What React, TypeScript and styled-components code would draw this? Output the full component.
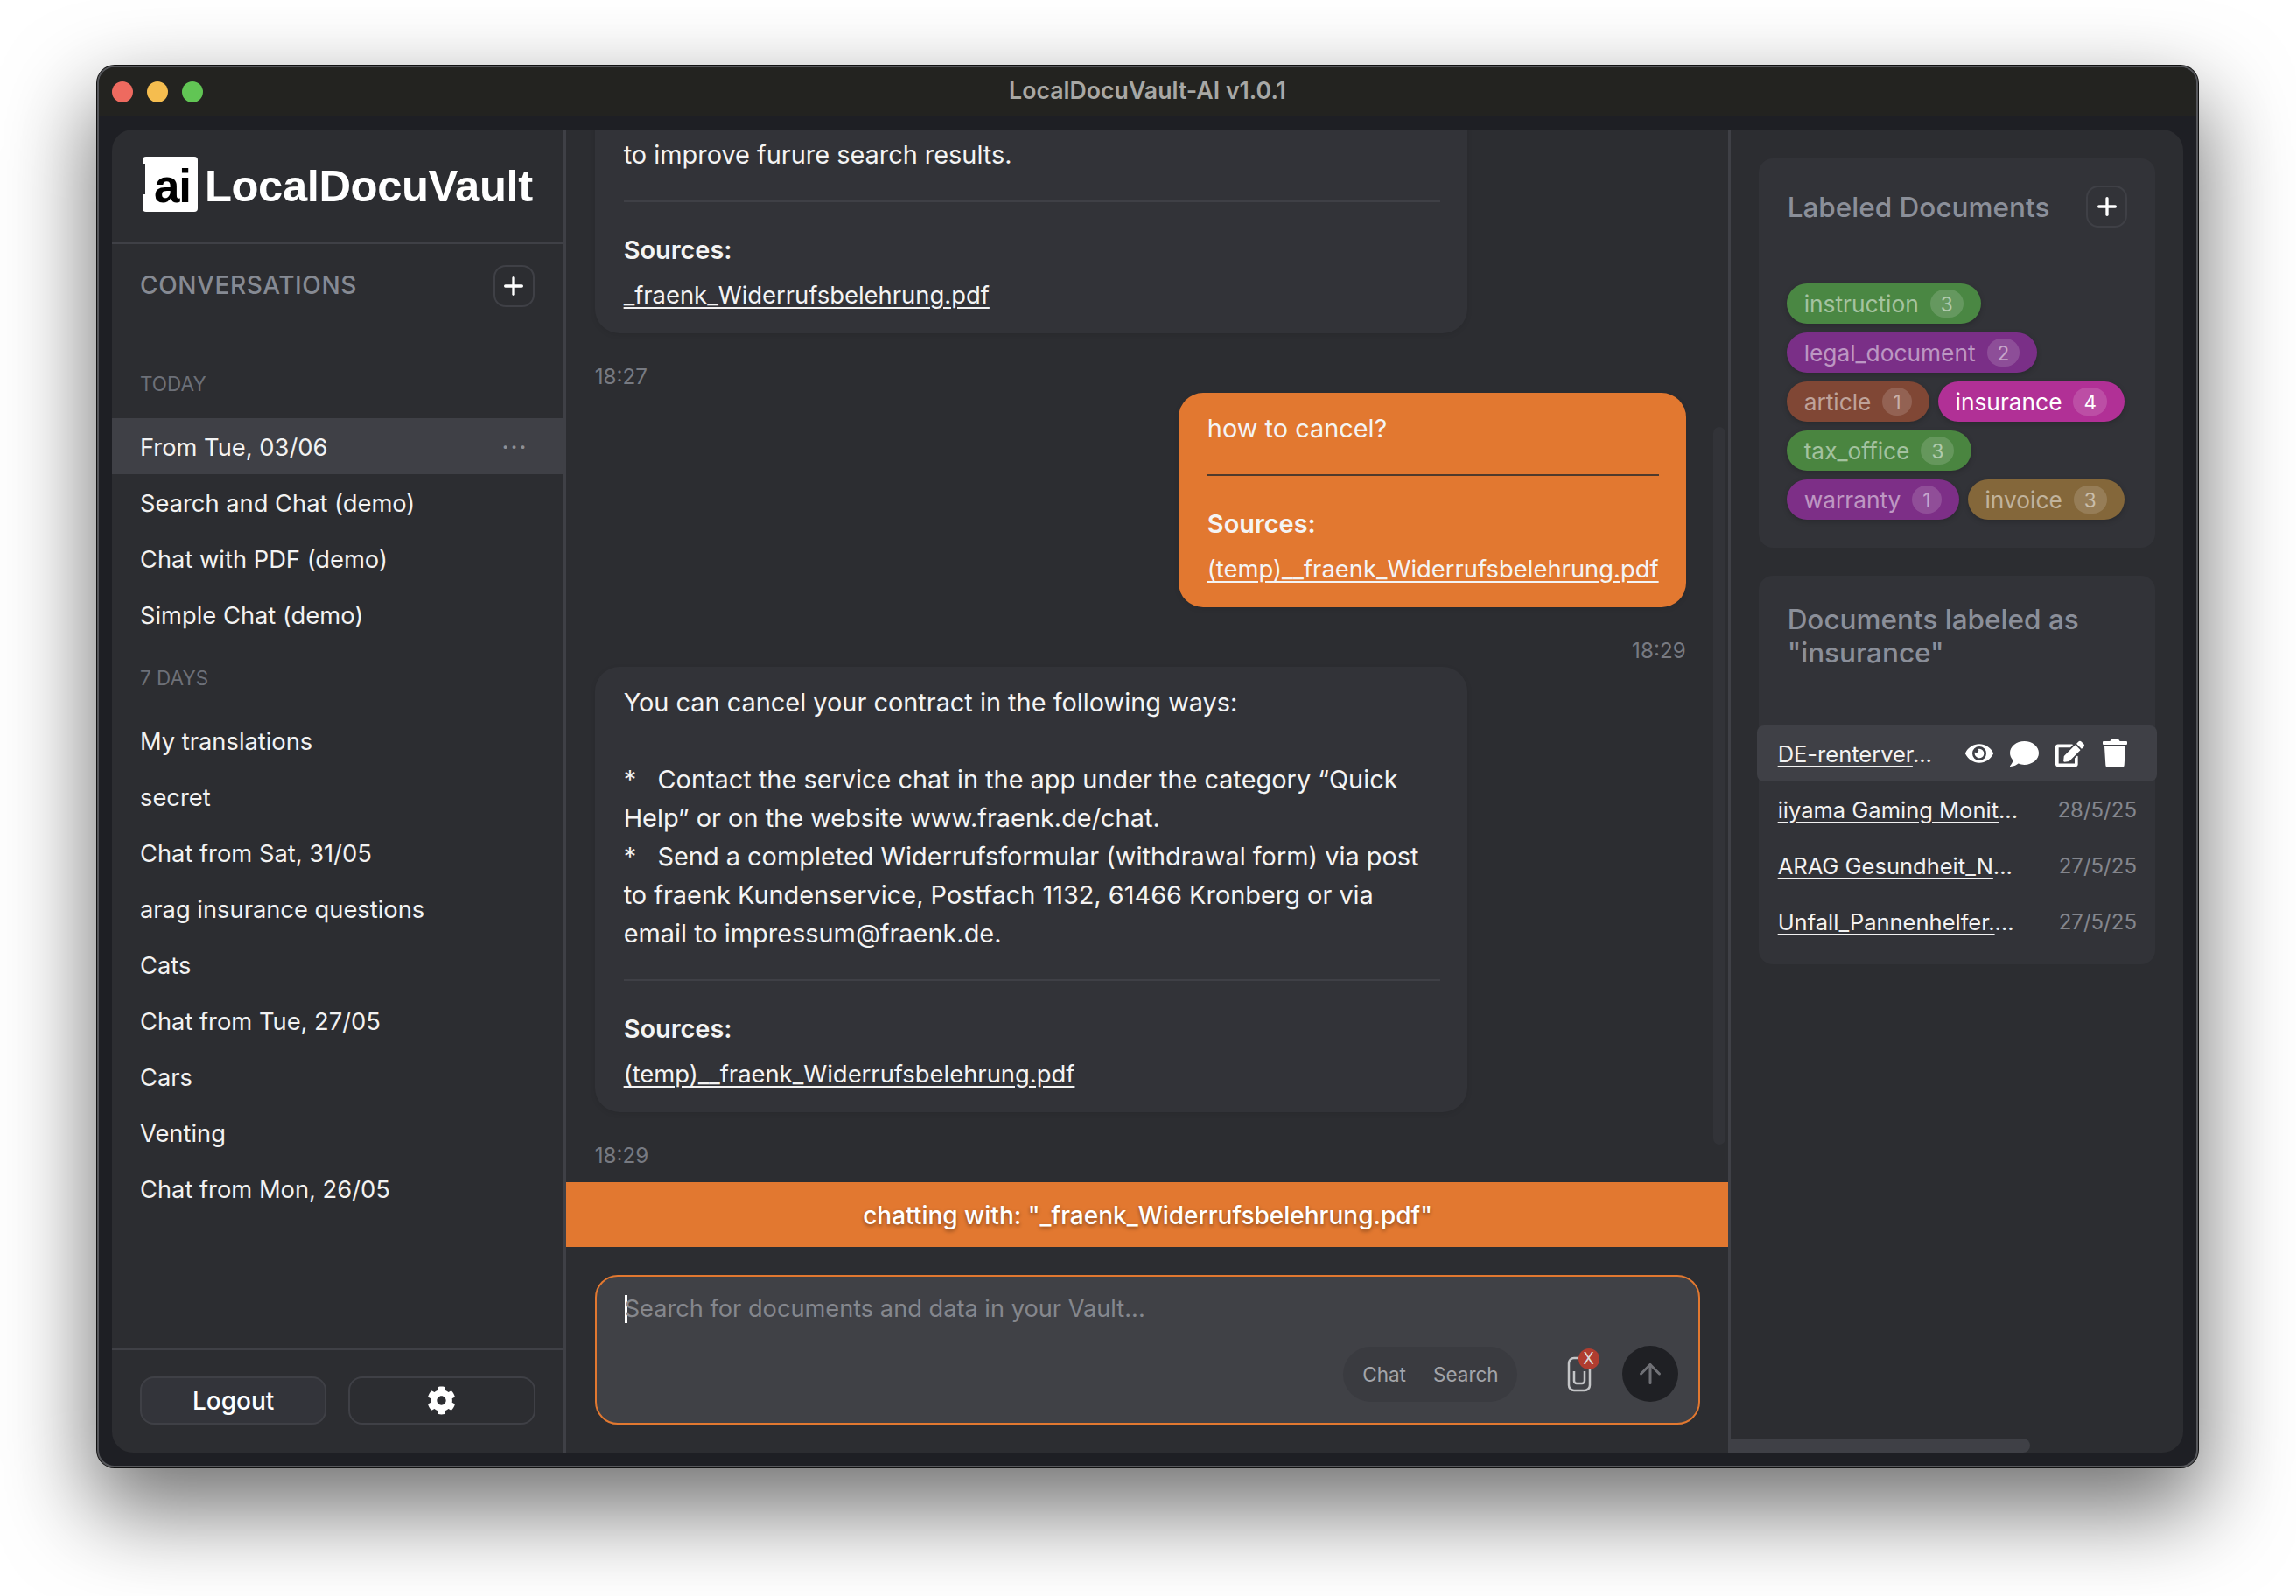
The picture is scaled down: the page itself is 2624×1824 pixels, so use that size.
import { ArrowUp, Plus } from 'lucide-react';
import { FaCog, FaComment, FaEdit, FaEye, FaTrash } from 'react-icons/fa';
import styled, { createGlobalStyle } from 'styled-components';

const TAGS = [
  [{ name: 'instruction', count: 3, color: '#4a8743' }],
  [{ name: 'legal_document', count: 2, color: '#7a2f87' }],
  [
    { name: 'article', count: 1, color: '#804735' },
    { name: 'insurance', count: 4, color: '#b13096', active: true },
  ],
  [{ name: 'tax_office', count: 3, color: '#4a8540' }],
  [
    { name: 'warranty', count: 1, color: '#7d2f87' },
    { name: 'invoice', count: 3, color: '#84673a' },
  ],
];

const DOCS = [
  { name: 'iiyama Gaming Monit', date: '28/5/25' },
  { name: 'ARAG Gesundheit_N', date: '27/5/25' },
  { name: 'Unfall_Pannenhelfer.', date: '27/5/25' },
];

const WEEK = [
  'My translations',
  'secret',
  'Chat from Sat, 31/05',
  'arag insurance questions',
  'Cats',
  'Chat from Tue, 27/05',
  'Cars',
  'Venting',
  'Chat from Mon, 26/05',
];

const Sources = ({ file }: { file: string }) => (
  <>
    <SourcesTitle>Sources:</SourcesTitle>
    <SourceLink>{file}</SourceLink>
  </>
);

export default function App() {
  return (
    <Page>
      <GlobalStyle />
      <Window>
        <TitleBar>
          <Lights>
            <Light $color="#ee6a5f" />
            <Light $color="#f5bd4f" />
            <Light $color="#61c554" />
          </Lights>
          <WindowTitle>LocalDocuVault-AI v1.0.1</WindowTitle>
        </TitleBar>
        <WindowBody>
          <Content>
            <Sidebar>
              <LogoBar>
                <LogoMark>ai</LogoMark>
                <LogoText>LocalDocuVault</LogoText>
              </LogoBar>
              <ConversationsHeader>
                <ConversationsTitle>Conversations</ConversationsTitle>
                <SquareButton>
                  <Plus size={32} strokeWidth={2.5} />
                </SquareButton>
              </ConversationsHeader>
              <ConversationList>
                <GroupLabel>Today</GroupLabel>
                <ConversationRow $selected>
                  From Tue, 03/06
                  <RowMenu>···</RowMenu>
                </ConversationRow>
                <ConversationRow>Search and Chat (demo)</ConversationRow>
                <ConversationRow>Chat with PDF (demo)</ConversationRow>
                <ConversationRow>Simple Chat (demo)</ConversationRow>
                <GroupLabel>7 Days</GroupLabel>
                {WEEK.map((title) => (
                  <ConversationRow key={title}>{title}</ConversationRow>
                ))}
              </ConversationList>
              <SidebarFooter>
                <FooterButton $raised>Logout</FooterButton>
                <FooterButton>
                  <FaCog size={33} />
                </FooterButton>
              </SidebarFooter>
            </Sidebar>

            <ChatColumn>
              <Messages>
                <Bubble>
                  <BubbleText>
                    temporary notes will be saved here, and the data may
                    <br />
                    to improve furure search results.
                  </BubbleText>
                  <BubbleRule />
                  <Sources file="_fraenk_Widerrufsbelehrung.pdf" />
                </Bubble>
                <Timestamp>18:27</Timestamp>
                <Bubble $user>
                  <BubbleText>how to cancel?</BubbleText>
                  <BubbleRule $user />
                  <Sources file="(temp)__fraenk_Widerrufsbelehrung.pdf" />
                </Bubble>
                <Timestamp $user>18:29</Timestamp>
                <Bubble>
                  <BubbleText>
                    You can cancel your contract in the following ways:
                    <br />
                    <br />
                    *&nbsp;&nbsp;&nbsp;Contact the service chat in the app under the category “Quick
                    <br />
                    Help” or on the website www.fraenk.de/chat.
                    <br />
                    *&nbsp;&nbsp;&nbsp;Send a completed Widerrufsformular (withdrawal form) via post
                    <br />
                    to fraenk Kundenservice, Postfach 1132, 61466 Kronberg or via
                    <br />
                    email to impressum@fraenk.de.
                  </BubbleText>
                  <BubbleRule />
                  <Sources file="(temp)__fraenk_Widerrufsbelehrung.pdf" />
                </Bubble>
                <Timestamp>18:29</Timestamp>
              </Messages>
              <ScrollThumb />
              <ChattingBar>chatting with: "_fraenk_Widerrufsbelehrung.pdf"</ChattingBar>
              <Composer>
                <InputBox>
                  <InputLine>
                    <Caret />
                    Search for documents and data in your Vault...
                  </InputLine>
                  <InputControls>
                    <ModeToggle>
                      <span>Chat</span>
                      <span>Search</span>
                    </ModeToggle>
                    <ClipButton>
                      <svg width="28" height="41" viewBox="0 0 28 41" fill="none" stroke="#c4c5c7" strokeWidth="2.5">
                        <path d="M20 2H8a6 6 0 0 0-6 6v25a6 6 0 0 0 6 6h12a6 6 0 0 0 6-6V12" />
                        <path d="M8 17v11a3 3 0 0 0 3 3h6a3 3 0 0 0 3-3V17" />
                      </svg>
                      <ClipBadge>X</ClipBadge>
                    </ClipButton>
                    <SendButton>
                      <ArrowUp size={36} strokeWidth={2} />
                    </SendButton>
                  </InputControls>
                </InputBox>
              </Composer>
            </ChatColumn>

            <RightColumn>
              <Panel>
                <PanelHeader>
                  <PanelTitle>Labeled Documents</PanelTitle>
                  <SquareButton>
                    <Plus size={32} strokeWidth={2.5} />
                  </SquareButton>
                </PanelHeader>
                <TagRows>
                  {TAGS.map((row) => (
                    <TagRow key={row[0].name}>
                      {row.map((tag) => (
                        <Tag key={tag.name} $color={tag.color}>
                          <TagName $active={tag.active}>{tag.name}</TagName>
                          <TagCount $active={tag.active}>{tag.count}</TagCount>
                        </Tag>
                      ))}
                    </TagRow>
                  ))}
                </TagRows>
              </Panel>
              <DocsPanel>
                <DocsTitle>
                  Documents labeled as
                  <br />
                  "insurance"
                </DocsTitle>
                <DocRow $hover>
                  <DocName>
                    <u>DE-renterver</u>...
                  </DocName>
                  <DocActions>
                    <FaEye size={32} />
                    <FaComment size={33} />
                    <FaEdit size={33} />
                    <FaTrash size={32} />
                  </DocActions>
                </DocRow>
                {DOCS.map((doc) => (
                  <DocRow key={doc.name}>
                    <DocName>
                      <u>{doc.name}</u>...
                    </DocName>
                    <DocDate>{doc.date}</DocDate>
                  </DocRow>
                ))}
              </DocsPanel>
              <HorizontalThumb />
            </RightColumn>
          </Content>
        </WindowBody>
      </Window>
    </Page>
  );
}

const GlobalStyle = createGlobalStyle`
  * { box-sizing: border-box; }
  html, body { margin: 0; background: #fff; }
  body { font-family: Inter, "Noto Sans", sans-serif; color: #f2f2f2; }
`;

const Page = styled.div`
  width: 2624px;
  height: 1824px;
  padding: 75px 112px 147px 111px;
  background: #fff;
  overflow: hidden;
`;

const Window = styled.div`
  width: 2401px;
  height: 1602px;
  display: flex;
  flex-direction: column;
  border: 2px solid #56575b;
  border-radius: 20px;
  background: #1e1f24;
  box-shadow: 0 0 0 1px #111, 0 44px 100px 6px rgba(0, 0, 0, 0.55);
  overflow: hidden;
`;

const TitleBar = styled.div`
  flex: 0 0 55px;
  display: grid;
  grid-template-columns: 1fr auto 1fr;
  align-items: center;
  background: #232320;
`;

const Lights = styled.div`
  display: flex;
  gap: 16px;
  padding-left: 15px;
`;

const Light = styled.span<{ $color: string }>`
  width: 24px;
  height: 24px;
  border-radius: 50%;
  background: ${({ $color }) => $color};
`;

const WindowTitle = styled.div`
  padding-bottom: 3px;
  font-size: 26.7px;
  font-weight: 600;
  color: #a8a8a5;
`;

const WindowBody = styled.div`
  flex: 1;
  min-height: 0;
  padding: 16px 15px 15px;
`;

const Content = styled.div`
  height: 100%;
  display: flex;
  border-radius: 24px;
  background: #2c2d31;
  overflow: hidden;
`;

const Sidebar = styled.aside`
  flex: 0 0 518px;
  display: flex;
  flex-direction: column;
  border-right: 3px solid #3f4046;
`;

const LogoBar = styled.div`
  flex: 0 0 131px;
  display: flex;
  align-items: center;
  gap: 8px;
  padding: 0 35px 3px;
  border-bottom: 3px solid #3f4046;
`;

const LogoMark = styled.div`
  position: relative;
  width: 63px;
  height: 63px;
  display: flex;
  align-items: flex-end;
  justify-content: center;
  padding: 0 0 3px 5px;
  border-radius: 4px;
  background: #fff;
  color: #000;
  font-family: 'Liberation Sans', Arial, sans-serif;
  font-size: 53px;
  font-weight: 700;
  line-height: 1;
  letter-spacing: -1px;

  &::before {
    content: '';
    position: absolute;
    left: 0;
    top: 8px;
    width: 3px;
    height: 35px;
    background: #2c2d31;
  }
`;

const LogoText = styled.div`
  padding-top: 3px;
  font-family: 'Liberation Sans', Arial, sans-serif;
  font-size: 50.7px;
  font-weight: 700;
  color: #fff;
  letter-spacing: -0.4px;
`;

const ConversationsHeader = styled.div`
  flex: 0 0 119px;
  display: flex;
  align-items: flex-start;
  justify-content: space-between;
  padding: 24px 33px 0 32px;
`;

const ConversationsTitle = styled.h2`
  margin: 0;
  font-size: 28px;
  line-height: 47px;
  font-weight: 500;
  letter-spacing: 0.6px;
  text-transform: uppercase;
  color: #868a93;
`;

const SquareButton = styled.button`
  width: 47px;
  height: 48px;
  display: flex;
  align-items: center;
  justify-content: center;
  padding: 0;
  border: 2px solid #3f4046;
  border-radius: 14px;
  background: transparent;
  color: #fff;
`;

const ConversationList = styled.div`
  flex: 1;
  min-height: 0;
  overflow: hidden;
`;

const GroupLabel = styled.div`
  height: 80px;
  display: flex;
  align-items: center;
  padding-left: 32px;
  font-size: 22.5px;
  text-transform: uppercase;
  color: #6d7078;
`;

const ConversationRow = styled.div<{ $selected?: boolean }>`
  height: 64px;
  display: flex;
  align-items: center;
  justify-content: space-between;
  padding: 2px 33px 0 32px;
  font-size: 27.3px;
  color: #f2f2f2;
  background: ${({ $selected }) => ($selected ? '#3f4046' : 'transparent')};
`;

const RowMenu = styled.span`
  margin-right: 7px;
  font-size: 28px;
  color: #8e9097;
  letter-spacing: 2px;
`;

const SidebarFooter = styled.div`
  flex: 0 0 120px;
  display: grid;
  grid-template-columns: 1fr 1fr;
  gap: 25px;
  padding: 30px 32px 32px 32px;
  border-top: 3px solid #3f4046;
`;

const FooterButton = styled.button<{ $raised?: boolean }>`
  display: flex;
  align-items: center;
  justify-content: center;
  border: 2px solid #3f4046;
  border-radius: 16px;
  background: ${({ $raised }) => ($raised ? '#33343a' : 'transparent')};
  color: #fff;
  font: 500 28px Inter, sans-serif;
`;

const ChatColumn = styled.main`
  position: relative;
  flex: 0 0 1328px;
  display: flex;
  flex-direction: column;
`;

const Messages = styled.div`
  flex: 1;
  min-height: 0;
  display: flex;
  flex-direction: column;
  justify-content: flex-end;
  padding: 0 48px 12px 33px;
  overflow: hidden;
`;

const Bubble = styled.div<{ $user?: boolean }>`
  flex: none;
  align-self: ${({ $user }) => ($user ? 'flex-end' : 'flex-start')};
  width: ${({ $user }) => ($user ? 'fit-content' : '997px')};
  padding: 19px 31px 22px 33px;
  border-radius: 28px;
  background: ${({ $user }) => ($user ? '#e27830' : '#323338')};
  box-shadow: 0 2px 6px rgba(0, 0, 0, 0.08);
  font-size: 28.9px;
  line-height: 44px;
  color: #f4f4f4;
`;

const BubbleText = styled.div`
  white-space: nowrap;
`;

const BubbleRule = styled.div<{ $user?: boolean }>`
  height: 2px;
  margin: 30px 0 33px;
  background: ${({ $user }) => ($user ? '#4f3a2c' : '#3f4046')};
`;

const SourcesTitle = styled.div`
  font-weight: 600;
`;

const SourceLink = styled.div`
  margin-top: 7px;
  font-size: 27.4px;
  text-decoration: underline;
  text-underline-offset: 4px;
`;

const Timestamp = styled.div<{ $user?: boolean }>`
  flex: none;
  align-self: ${({ $user }) => ($user ? 'flex-end' : 'flex-start')};
  height: 30px;
  margin: 35px 0 3px;
  font-size: 24.2px;
  line-height: 30px;
  color: #777a82;
`;

const ScrollThumb = styled.div`
  position: absolute;
  right: 3px;
  top: 340px;
  width: 14px;
  height: 820px;
  border-radius: 7px;
  background: #323338;
`;

const ChattingBar = styled.div`
  flex: 0 0 74px;
  display: flex;
  align-items: center;
  justify-content: center;
  padding: 1px 0 0 2px;
  background: #e27830;
  color: #fff;
  font-size: 28px;
  font-weight: 500;
  text-shadow: 0 2px 4px rgba(0, 0, 0, 0.4);
`;

const Composer = styled.div`
  flex: 0 0 235px;
  padding: 32px 32px 32px 33px;
`;

const InputBox = styled.div`
  height: 171px;
  display: flex;
  flex-direction: column;
  justify-content: space-between;
  padding: 19px 23px 24px 32px;
  border: 2.5px solid #e27830;
  border-radius: 26px;
  background: #404146;
`;

const InputLine = styled.div`
  display: flex;
  align-items: center;
  padding-top: 2px;
  font-size: 27.2px;
  line-height: 32px;
  color: #85878d;
`;

const Caret = styled.span`
  width: 3px;
  height: 32px;
  margin-right: -3px;
  background: #fff;
`;

const InputControls = styled.div`
  display: flex;
  align-items: center;
  justify-content: flex-end;
`;

const ModeToggle = styled.div`
  height: 63px;
  display: flex;
  align-items: center;
  gap: 31px;
  padding: 0 21px 0 22px;
  border-radius: 32px;
  background: #3a3b40;
  font-size: 22.5px;
  color: #a3a5aa;
`;

const ClipButton = styled.div`
  position: relative;
  display: flex;
  margin: 0 35px 0 57px;
`;

const ClipBadge = styled.span`
  position: absolute;
  top: -9px;
  right: -9px;
  width: 24px;
  height: 24px;
  display: flex;
  align-items: center;
  justify-content: center;
  border-radius: 50%;
  background: #b03d30;
  color: #ddd;
  font-size: 18px;
`;

const SendButton = styled.div`
  width: 64px;
  height: 64px;
  display: flex;
  align-items: center;
  justify-content: center;
  border-radius: 50%;
  background: #1f2024;
  color: #707176;
`;

const RightColumn = styled.aside`
  position: relative;
  flex: 1;
  min-width: 0;
  display: flex;
  flex-direction: column;
  gap: 32px;
  padding: 33px 32px 0;
  border-left: 3px solid #3f4046;
`;

const Panel = styled.section`
  height: 445px;
  padding: 31px 32px 32px 33px;
  border-radius: 16px;
  background: #323338;
`;

const PanelHeader = styled.div`
  display: flex;
  align-items: center;
  justify-content: space-between;
`;

const PanelTitle = styled.h3`
  margin: 0;
  font-size: 31.5px;
  font-weight: 500;
  color: #8b8f99;
`;

const TagRows = styled.div`
  display: flex;
  flex-direction: column;
  gap: 10px;
  margin-top: 64px;
  margin-left: -1px;
`;

const TagRow = styled.div`
  display: flex;
  gap: 10px;
`;

const Tag = styled.div<{ $color: string }>`
  height: 46px;
  display: flex;
  align-items: center;
  gap: 13px;
  padding: 0 20px;
  border-radius: 23px;
  background: ${({ $color }) => $color};
  box-shadow: 0 2px 6px rgba(0, 0, 0, 0.2);
`;

const TagName = styled.span<{ $active?: boolean }>`
  font-size: 26.3px;
  color: ${({ $active }) => ($active ? '#fff' : 'rgba(255, 255, 255, 0.5)')};
`;

const TagCount = styled.span<{ $active?: boolean }>`
  height: 32px;
  padding: 0 12px;
  display: flex;
  align-items: center;
  justify-content: center;
  border-radius: 16px;
  background: rgba(255, 255, 255, 0.15);
  font-size: 22.5px;
  color: ${({ $active }) => ($active ? '#fff' : 'rgba(255, 255, 255, 0.5)')};
`;

const DocsPanel = styled.section`
  height: 444px;
  padding: 31px 0 16px;
  border-radius: 16px;
  background: #323338;
`;

const DocsTitle = styled.h3`
  margin: 0 0 64px;
  padding-left: 33px;
  font-size: 31.5px;
  line-height: 38px;
  font-weight: 500;
  color: #8b8f99;
`;

const DocRow = styled.div<{ $hover?: boolean }>`
  height: 64px;
  margin: 0 -2px;
  display: flex;
  align-items: center;
  justify-content: space-between;
  padding: 0 23px 0 24px;
  border-radius: 8px;
  background: ${({ $hover }) => ($hover ? '#3f4046' : 'transparent')};
`;

const DocName = styled.span`
  font-size: 25.5px;
  color: #f2f2f2;

  u {
    text-underline-offset: 4px;
  }
`;

const DocActions = styled.div`
  display: flex;
  align-items: center;
  gap: 19px;
  margin-right: 9px;
  color: #fff;
`;

const DocDate = styled.span`
  font-size: 24px;
  color: #84868d;
`;

const HorizontalThumb = styled.div`
  position: absolute;
  left: 0;
  bottom: 0;
  width: 342px;
  height: 16px;
  border-radius: 0 8px 8px 0;
  background: #3f4046;
`;
